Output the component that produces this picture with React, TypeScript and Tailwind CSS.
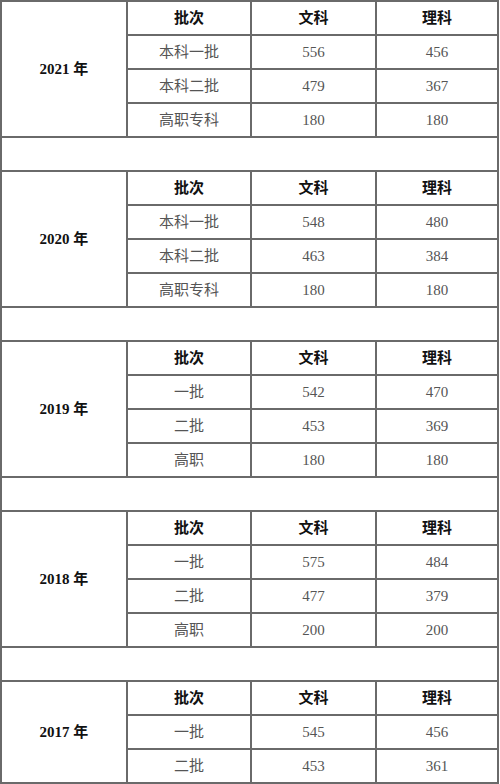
import React from 'react';

type Block = {
  year: string;
  rows: [string, string, string][];
};

const blocks: Block[] = [
  {
    year: '2021',
    rows: [
      ['本科一批', '556', '456'],
      ['本科二批', '479', '367'],
      ['高职专科', '180', '180'],
    ],
  },
  {
    year: '2020',
    rows: [
      ['本科一批', '548', '480'],
      ['本科二批', '463', '384'],
      ['高职专科', '180', '180'],
    ],
  },
  {
    year: '2019',
    rows: [
      ['一批', '542', '470'],
      ['二批', '453', '369'],
      ['高职', '180', '180'],
    ],
  },
  {
    year: '2018',
    rows: [
      ['一批', '575', '484'],
      ['二批', '477', '379'],
      ['高职', '200', '200'],
    ],
  },
  {
    year: '2017',
    rows: [
      ['一批', '545', '456'],
      ['二批', '453', '361'],
    ],
  },
];

const cell = 'border-2 border-[#6a6a6a] text-center align-middle p-0';

export default function App() {
  return (
    <div
      className="w-[500px] h-[784px] overflow-hidden bg-white"
      style={{ fontFamily: '"Liberation Serif", "Noto Sans CJK SC", serif' }}
    >
      <table className="border-collapse w-[497px] table-fixed">
        <colgroup>
          <col className="w-[126px]" />
          <col className="w-[124px]" />
          <col className="w-[125px]" />
          <col className="w-[122px]" />
        </colgroup>
        <tbody>
          {blocks.map((b, i) => (
            <React.Fragment key={b.year}>
              {i > 0 && (
                <tr className="h-[34px]">
                  <td colSpan={4} className={cell}></td>
                </tr>
              )}
              <tr className="h-[34px]">
                <td
                  rowSpan={b.rows.length + 1}
                  className={`${cell} text-[15px] font-bold text-[#111]`}
                >
                  {b.year} 年
                </td>
                <td className={`${cell} text-[15px] font-bold text-[#111]`}>批次</td>
                <td className={`${cell} text-[15px] font-bold text-[#111]`}>文科</td>
                <td className={`${cell} text-[15px] font-bold text-[#111]`}>理科</td>
              </tr>
              {b.rows.map((r) => (
                <tr key={r[0]} className="h-[34px]">
                  <td className={`${cell} text-[15px] text-[#555]`}>{r[0]}</td>
                  <td className={`${cell} text-[15px] text-[#555]`}>{r[1]}</td>
                  <td className={`${cell} text-[15px] text-[#555]`}>{r[2]}</td>
                </tr>
              ))}
            </React.Fragment>
          ))}
        </tbody>
      </table>
    </div>
  );
}
